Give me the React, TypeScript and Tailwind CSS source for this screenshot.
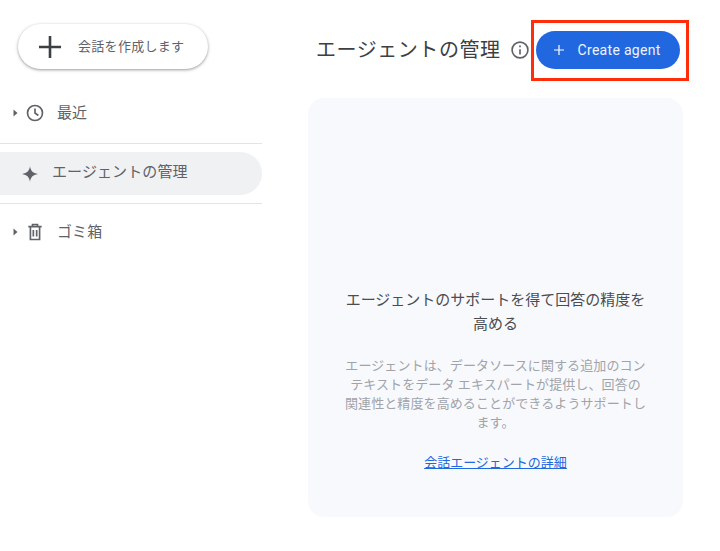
import React from "react";

const font = { fontFamily: '"Roboto", "Noto Sans CJK JP", sans-serif' };

function Caret() {
  return (
    <svg width="5" height="8" viewBox="0 0 5 8" className="shrink-0 text-[#5f6368]">
      <path d="M0.5 0.5 L4.5 4 L0.5 7.5 Z" fill="currentColor" />
    </svg>
  );
}

export default function App() {
  return (
    <div className="relative flex h-[551px] w-[720px] overflow-hidden bg-white" style={font}>
      <aside className="w-[262px] shrink-0 pt-6">
        <button className="ml-[18px] flex h-[45px] w-[190px] items-center rounded-full bg-white pl-[20px] shadow-[0_1px_3px_1px_rgba(60,64,67,0.18),0_1px_2px_rgba(60,64,67,0.3)]">
          <svg width="24" height="24" viewBox="0 0 24 24" className="shrink-0 text-[#3c4043]">
            <path d="M12 1v22M1 12h22" stroke="currentColor" strokeWidth="2.6" fill="none" />
          </svg>
          <span className="ml-[16px] text-[13px] tracking-[0.3px] text-[#5f6368]">会話を作成します</span>
        </button>

        <div className="mt-[25px] flex h-[38px] items-center pl-[13px]">
          <Caret />
          <svg width="20" height="20" viewBox="0 0 24 24" fill="none" stroke="#5f6368" strokeWidth="2" className="ml-[7px] shrink-0">
            <circle cx="12" cy="12" r="9" />
            <path d="M12 6.5V12l4 3" />
          </svg>
          <span className="ml-[12px] text-[15px] tracking-[0.1px] text-[#5f6368]">最近</span>
        </div>

        <div className="mt-[11px] h-px bg-[#e3e4e6]" />

        <div className="mt-2 flex h-[43px] items-center rounded-r-full bg-[#f0f1f3] pl-[22px]">
          <svg width="16" height="16" viewBox="0 0 16 16" className="shrink-0 text-[#5f6368]">
            <path d="M8 0 C8.6 4.6 10.6 7.2 16 8 C10.6 8.8 8.6 11.4 8 16 C7.4 11.4 5.4 8.8 0 8 C5.4 7.2 7.4 4.6 8 0 Z" fill="currentColor" />
          </svg>
          <span className="ml-[14px] -translate-y-px text-[15px] tracking-[0.1px] text-[#5f6368]">エージェントの管理</span>
        </div>

        <div className="mt-2 h-px bg-[#e3e4e6]" />

        <div className="mt-[9px] flex h-[38px] items-center pl-[13px]">
          <Caret />
          <svg width="20" height="20" viewBox="0 0 24 24" fill="none" stroke="#5f6368" strokeWidth="2" className="ml-[7px] shrink-0">
            <path d="M4 5.5h16M9 5V3h6v2M6.5 6v15h11V6M10 9.5v8M14 9.5v8" />
          </svg>
          <span className="ml-[12px] text-[15px] tracking-[0.1px] text-[#5f6368]">ゴミ箱</span>
        </div>
      </aside>

      <main className="ml-[46px] w-[375px] shrink-0 pt-[31px]">
        <header className="flex h-[38px] items-center pl-[8px]">
          <h1 className="text-[20px] font-normal leading-none tracking-[0.55px] whitespace-nowrap text-[#3c4043]">エージェントの管理</h1>
          <svg width="20" height="20" viewBox="0 0 24 24" fill="none" stroke="#5f6368" strokeWidth="2" className="ml-[9px] shrink-0">
            <circle cx="12" cy="12" r="9.5" />
            <path d="M12 11v6.5" />
            <path d="M12 6.5v2.2" />
          </svg>
          <button className="ml-[6px] flex h-[38px] w-[144px] shrink-0 items-center rounded-full bg-[#2168e0] pl-[17px] text-white">
            <svg width="12" height="12" viewBox="0 0 12 12" className="shrink-0">
              <path d="M6 1v10M1 6h10" stroke="currentColor" strokeWidth="1.2" fill="none" />
            </svg>
            <span className="ml-[13px] text-[14px] font-normal tracking-[0.3px] text-[#eef3fe]">Create agent</span>
          </button>
        </header>

        <section className="mt-[29px] flex h-[419px] flex-col items-center rounded-2xl bg-[#f8f9fd] px-[37px] pt-[190px] text-center">
          <h2 className="text-[15px] font-normal leading-6 text-[#4a4d51]">エージェントのサポートを得て回答の精度を高める</h2>
          <p className="mt-5 w-[303px] text-[13px] leading-[19px] tracking-[0.1px] text-[#a0a4a9]">
            エージェントは、データソースに関する追加のコンテキストをデータ エキスパートが提供し、回答の関連性と精度を高めることができるようサポートします。
          </p>
          <a href="#" className="mt-[21px] text-[13px] leading-[19px] text-[#2168e0] underline">会話エージェントの詳細</a>
        </section>
      </main>

      <div className="absolute left-[531px] top-[20px] h-[61px] w-[158px] border-[3px] border-[#ff2d0a]" />
    </div>
  );
}
